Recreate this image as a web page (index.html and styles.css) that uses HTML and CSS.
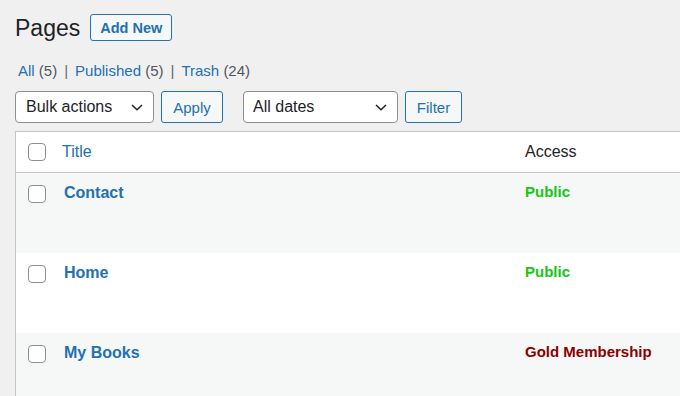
FILE: index.html
```html
<!DOCTYPE html>
<html>
<head>
<meta charset="utf-8">
<link rel="stylesheet" href="styles.css">
</head>
<body>
<div class="wrap">
  <div class="heading">
    <h1 class="title">Pages</h1>
    <a class="btn btn-add">Add New</a>
  </div>
  <ul class="subsub">
    <li><a class="lnk">All</a> <span class="count">(5)</span></li>
    <li class="sep">|</li>
    <li><a class="lnk">Published</a> <span class="count">(5)</span></li>
    <li class="sep">|</li>
    <li><a class="lnk">Trash</a> <span class="count">(24)</span></li>
  </ul>
  <div class="tablenav">
    <div class="select sel-bulk"><span>Bulk actions</span><svg class="chev" width="12" height="7" viewBox="0 0 12 7"><path d="M1 1 L6 5.8 L11 1" fill="none" stroke="#1d2327" stroke-width="1.5"/></svg></div>
    <a class="btn btn-sec btn-apply">Apply</a>
    <div class="select sel-dates"><span>All dates</span><svg class="chev" width="12" height="7" viewBox="0 0 12 7"><path d="M1 1 L6 5.8 L11 1" fill="none" stroke="#1d2327" stroke-width="1.5"/></svg></div>
    <a class="btn btn-sec btn-filter">Filter</a>
  </div>
  <div class="table">
    <div class="row head">
      <div class="cb"><span class="box"></span></div>
      <div class="col-title"><a class="lnk">Title</a></div>
      <div class="col-access">Access</div>
    </div>
    <div class="row item alt">
      <div class="cb"><span class="box"></span></div>
      <div class="col-title"><a class="lnk strong">Contact</a></div>
      <div class="col-access"><span class="acc public">Public</span></div>
    </div>
    <div class="row item">
      <div class="cb"><span class="box"></span></div>
      <div class="col-title"><a class="lnk strong">Home</a></div>
      <div class="col-access"><span class="acc public">Public</span></div>
    </div>
    <div class="row item alt">
      <div class="cb"><span class="box"></span></div>
      <div class="col-title"><a class="lnk strong">My Books</a></div>
      <div class="col-access"><span class="acc gold">Gold Membership</span></div>
    </div>
  </div>
</div>
</body>
</html>
```

FILE: styles.css
```css
html, body {
  margin: 0;
  padding: 0;
  background: #f0f0f1;
  overflow: hidden;
  height: 396px;
}
body {
  font-family: "Liberation Sans", Arial, sans-serif;
  color: #1d2327;
}
.wrap {
  padding: 14px 0 0 15px;
  width: 665px;
}
.heading {
  display: flex;
  align-items: center;
  gap: 10px;
  height: 27px;
}
.title {
  margin: 0;
  font-size: 23px;
  font-weight: 400;
  line-height: 27px;
  position: relative;
  top: 1px;
}
.btn {
  display: inline-flex;
  align-items: center;
  justify-content: center;
  box-sizing: border-box;
  border: 1px solid #2271b1;
  border-radius: 3px;
  color: #2271b1;
  background: #f6f7f7;
  font-size: 15px;
}
.btn-add {
  width: 82px;
  height: 27px;
  font-weight: 600;
  font-size: 14.5px;
}
.subsub {
  list-style: none;
  margin: 20px 0 0 3px;
  padding: 0;
  display: flex;
  gap: 7px;
  font-size: 15px;
  height: 20px;
  line-height: 20px;
  color: #50575e;
}
.subsub li { white-space: nowrap; }
.lnk { color: #2271b1; text-decoration: none; }
.count { color: #50575e; }
.sep { color: #646970; }
.tablenav {
  display: flex;
  margin-top: 10px;
  height: 32px;
}
.select {
  box-sizing: border-box;
  height: 32px;
  border: 1px solid #8c8f94;
  border-radius: 4px;
  background: #fff;
  display: flex;
  align-items: center;
  justify-content: space-between;
  padding: 0 10px 0 10px;
  font-size: 16px;
  color: #1d2327;
}
.sel-bulk { width: 139px; margin-right: 7px; }
.sel-dates { width: 155px; margin-right: 7px; padding-left: 9px; }
.chev { margin-top: 1px; }
.btn-sec { height: 32px; }
.btn-apply { width: 62px; margin-right: 20px; }
.btn-filter { width: 57px; }
.table {
  margin-top: 8px;
  border: 1px solid #c3c4c7;
  border-right: none;
  background: #fff;
}
.row {
  display: flex;
  font-size: 16px;
}
.head {
  height: 40px;
  border-bottom: 1px solid #c3c4c7;
  align-items: center;
}
.item {
  height: 80px;
  align-items: flex-start;
}
.alt { background: #f6f7f7; }
.cb {
  width: 46px;
  box-sizing: border-box;
  padding-left: 12px;
  display: flex;
}
.box {
  display: block;
  box-sizing: border-box;
  width: 18px;
  height: 18px;
  border: 1px solid #8c8f94;
  border-radius: 4px;
  background: #fff;
}
.head .col-title { width: 463px; }
.item .cb { padding-top: 12px; }
.item .col-title { width: 461px; padding-left: 2px; padding-top: 10px; line-height: 20px; }
.item .col-access { padding-top: 9px; line-height: 20px; }
.strong { font-weight: 700; }
.acc { font-size: 15px; font-weight: 700; }
.public { color: #14c814; }
.gold { color: #8b0000; }
```
